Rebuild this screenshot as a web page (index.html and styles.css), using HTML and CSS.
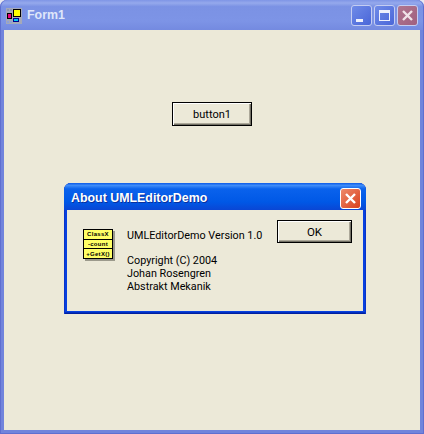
FILE: index.html
```html
<!DOCTYPE html>
<html lang="en">
<head>
  <meta charset="UTF-8">
  <title>Form1</title>
  <link rel="stylesheet" href="styles.css">
</head>
<body>

  <div class="window">
    <div class="titlebar">
      <svg class="app-icon" width="16" height="16" viewBox="0 0 16 16">
        <rect x="0" y="0" width="16" height="16" fill="#a5a9b8"/>
        <rect x="1.5" y="5.5" width="4" height="5" fill="#e8007c" stroke="#000" stroke-width="1"/>
        <rect x="7.5" y="1.5" width="7" height="7" fill="#ffff00" stroke="#000" stroke-width="1"/>
        <rect x="7.5" y="10.5" width="5" height="3" fill="#00c8f0" stroke="#000090" stroke-width="1"/>
        <rect x="1" y="13" width="2" height="2" fill="#8fa0d8"/>
        <rect x="4" y="13" width="2" height="2" fill="#8fa0d8"/>
        <rect x="1" y="1" width="2" height="2" fill="#8f96b0"/>
        <rect x="4" y="1" width="2" height="2" fill="#8f96b0"/>
      </svg>
      <span class="title">Form1</span>
      <div class="controls">
        <div class="ctl ctl-blue"><span class="min-bar"></span></div>
        <div class="ctl ctl-blue"><span class="max-box"></span></div>
        <div class="ctl ctl-red">
          <svg width="13" height="13" viewBox="0 0 13 13"><path d="M2 2l9 9M11 2l-9 9" stroke="#f0e4e8" stroke-width="2.4" fill="none"/></svg>
        </div>
      </div>
    </div>
    <div class="client">
      <button class="button button1">button1</button>
    </div>
  </div>

  <div class="dialog">
    <div class="dlg-titlebar">
      <span class="dlg-title">About UMLEditorDemo</span>
      <div class="dlg-close">
        <svg width="13" height="13" viewBox="0 0 13 13"><path d="M2 2l9 9M11 2l-9 9" stroke="#fff" stroke-width="2.4" fill="none"/></svg>
      </div>
    </div>
    <div class="dlg-body">
      <div class="uml-icon">
        <div class="uml-row">ClassX</div>
        <div class="uml-row">-count</div>
        <div class="uml-row">+GetX()</div>
      </div>
      <div class="about-text">
        <p class="version">UMLEditorDemo Version 1.0</p>
        <p>Copyright (C) 2004</p>
        <p>Johan Rosengren</p>
        <p>Abstrakt Mekanik</p>
      </div>
      <button class="button ok">OK</button>
    </div>
  </div>

</body>
</html>
```

FILE: styles.css
```css
html, body {
  margin: 0;
  padding: 0;
}

body {
  width: 424px;
  height: 434px;
  overflow: hidden;
  background: #e8e8f0;
  font-family: "Liberation Sans", Arial, sans-serif;
  position: relative;
}

.window {
  width: 424px;
  height: 434px;
  box-sizing: border-box;
  display: flex;
  flex-direction: column;
  background: #7184dc;
  border-radius: 7px 7px 0 0;
  padding: 0 4px 4px 4px;
  box-shadow: inset 1px 0 0 #5f6fd0, inset -1px 0 0 #5f6fd0, inset 0 -1px 0 #5f6fd0;
}

.titlebar {
  height: 30px;
  margin: 0 -3px;
  padding: 0 3px;
  flex: none;
  display: flex;
  align-items: center;
  border-radius: 7px 7px 0 0;
  background: linear-gradient(180deg, #7f95e6 0%, #95a9ec 10%, #7b92e4 22%, #7d94e6 70%, #748ae0 100%);
}

.app-icon {
  margin: 1px 0 0 2px;
  flex: none;
}

.title {
  margin-left: 5px;
  font-size: 12.4px;
  font-weight: bold;
  color: #dfe6fa;
}

.controls {
  margin-left: auto;
  margin-right: 2px;
  display: flex;
  gap: 2px;
}

.ctl {
  width: 19px;
  height: 19px;
  border: 1px solid #c4cdf2;
  border-radius: 3px;
  display: flex;
  align-items: center;
  justify-content: center;
  position: relative;
}

.ctl-blue {
  background: linear-gradient(135deg, #6f8be8, #4a66d8);
}

.ctl-red {
  background: linear-gradient(135deg, #b0768e, #a06080);
}

.min-bar {
  width: 7px;
  height: 3px;
  background: #eef0fc;
  position: absolute;
  left: 4px;
  bottom: 3px;
}

.max-box {
  width: 9px;
  height: 7px;
  border: 1px solid #eef0fc;
  border-top-width: 3px;
}

.client {
  flex: 1;
  background: #ece9d8;
  display: flex;
  flex-direction: column;
  align-items: flex-start;
}

.button {
  box-sizing: border-box;
  padding: 0;
  background: #ece9d8;
  border: 1px solid #000;
  box-shadow: inset 1px 1px 0 #fff, inset -1px -1px 0 #716f64, inset -2px -2px 0 #aca899;
  font-family: Roboto, Arial, sans-serif;
  font-size: 11px;
  color: #000;
}

.button1 {
  width: 80px;
  height: 24px;
  margin: 72px 0 0 168px;
}

/* the dialog floats over the form */
.dialog {
  position: absolute;
  left: 64px;
  top: 183px;
  width: 302px;
  height: 131px;
  box-sizing: border-box;
  display: flex;
  flex-direction: column;
  background: #0840e0;
  border-radius: 7px 7px 0 0;
  padding: 0 3px 3px 3px;
  box-shadow: inset 1px 0 0 #0a34c8, inset -1px 0 0 #0a34c8, inset 0 -1px 0 #001ea0, inset 0 -2px 0 #0030c0;
}

.dlg-titlebar {
  height: 27px;
  margin: 0 -3px;
  padding: 5px 5px 0 7px;
  box-sizing: border-box;
  flex: none;
  display: flex;
  align-items: flex-start;
  justify-content: space-between;
  border-radius: 7px 7px 0 0;
  background: linear-gradient(180deg, #0a5ae8 0%, #3f8cf8 9%, #0a62ec 22%, #0058e6 70%, #0a46d4 100%);
}

.dlg-title {
  margin-top: 3px;
  font-size: 12.4px;
  font-weight: bold;
  color: #fff;
  text-shadow: 1px 1px 0 #0a2f9c;
}

.dlg-close {
  width: 19px;
  height: 19px;
  border: 1px solid #fff;
  border-radius: 3px;
  background: linear-gradient(135deg, #ee8a6a, #d8401e);
  display: flex;
  align-items: center;
  justify-content: center;
}

.dlg-body {
  flex: 1;
  background: #ece9d8;
  display: flex;
  align-items: flex-start;
  font-family: Roboto, Arial, sans-serif;
  font-size: 10.8px;
  color: #000;
}

.uml-icon {
  margin: 19px 0 0 16px;
  width: 28px;
  height: 28px;
  flex: none;
  border: 1px solid #000;
  box-shadow: 2px 2px 0 #9c9a8c;
  display: flex;
  flex-direction: column;
  background: #ffff66;
}

.uml-row {
  flex: 1;
  display: flex;
  align-items: center;
  justify-content: center;
  font-family: "Liberation Sans", Arial, sans-serif;
  font-size: 6px;
  font-weight: bold;
  letter-spacing: 0.3px;
  line-height: 1;
  border-top: 1px solid #000;
  overflow: hidden;
}

.uml-row:first-child {
  border-top: none;
}

.about-text {
  margin: 19px 0 0 14px;
  width: 150px;
  flex: none;
  line-height: 13px;
}

.about-text p {
  margin: 0;
  white-space: nowrap;
}

.about-text .version {
  margin-bottom: 12px;
}

.ok {
  width: 75px;
  height: 23px;
  margin: 10px 0 0 0;
  font-size: 11.5px;
}
```
